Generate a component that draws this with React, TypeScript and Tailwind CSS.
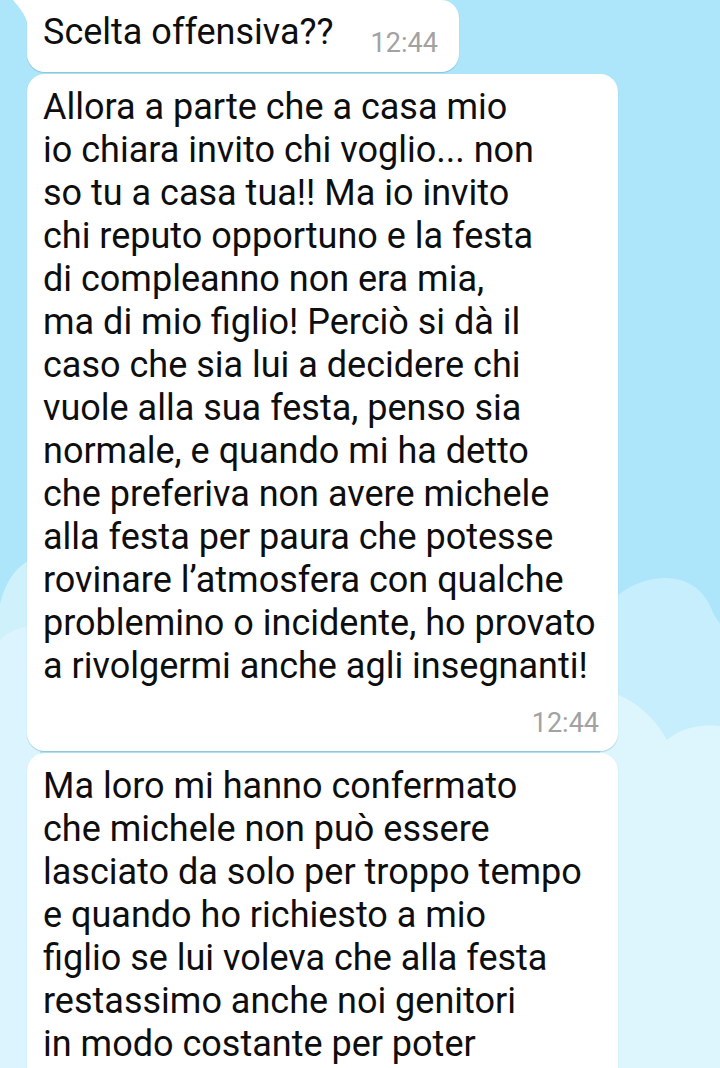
const firstLines = [
  "Allora a parte che a casa mio",
  "io chiara invito chi voglio... non",
  "so tu a casa tua!! Ma io invito",
  "chi reputo opportuno e la festa",
  "di compleanno non era mia,",
  "ma di mio figlio! Perciò si dà il",
  "caso che sia lui a decidere chi",
  "vuole alla sua festa, penso sia",
  "normale, e quando mi ha detto",
  "che preferiva non avere michele",
  "alla festa per paura che potesse",
  "rovinare l’atmosfera con qualche",
  "problemino o incidente, ho provato",
  "a rivolgermi anche agli insegnanti!",
];

const secondLines = [
  "Ma loro mi hanno confermato",
  "che michele non può essere",
  "lasciato da solo per troppo tempo",
  "e quando ho richiesto a mio",
  "figlio se lui voleva che alla festa",
  "restassimo anche noi genitori",
  "in modo costante per poter",
];

function Sky() {
  return (
    <svg
      className="absolute inset-0 h-full w-full"
      viewBox="0 0 720 1068"
      preserveAspectRatio="none"
    >
      <rect width="720" height="1068" fill="#ade6fa" />
      {/* far clouds */}
      <path
        d="M600 615 C615 592 640 578 665 578 C690 578 705 592 712 610 C716 620 720 622 720 624 L720 1068 L600 1068 Z"
        fill="#c6eefc"
      />
      <path
        d="M0 604 C6 580 18 562 40 556 L40 1068 L0 1068 Z"
        fill="#cff1fc"
      />
      {/* near clouds */}
      <path
        d="M600 690 C620 692 650 708 667 740 C680 728 700 724 720 726 L720 1068 L600 1068 Z"
        fill="#ddf5fd"
      />
      <path
        d="M0 640 C10 630 22 626 40 626 L40 1068 L0 1068 Z"
        fill="#dbf4fd"
      />
    </svg>
  );
}

export default function App() {
  return (
    <div className="relative h-[1068px] w-[720px] overflow-hidden font-['Roboto',sans-serif] text-[#0e0e0e]">
      <Sky />
      <div className="relative flex flex-col items-start gap-[2px] pl-[27px]">
        <div className="relative flex items-end rounded-[18px] rounded-tl-none bg-white pb-[18px] pl-[16px] pr-[21px] pt-[11px] shadow-[0_1px_1px_rgba(40,90,110,0.25)]">
          <svg
            className="absolute -left-[14px] top-0 h-[22px] w-[14px]"
            viewBox="0 0 14 22"
          >
            <path d="M0 0 L14 0 L14 22 C12 14 6 7 0 0 Z" fill="#fff" />
          </svg>
          <span className="text-[36px] leading-[43px]">Scelta offensiva??</span>
          <span className="ml-[37px] text-[27px] leading-[21px] text-[#a2a2a2]">
            12:44
          </span>
        </div>

        <div className="w-[591px] rounded-[18px] bg-white pb-[14px] pl-[16px] pr-[19px] pt-[12px] shadow-[0_1px_1px_rgba(40,90,110,0.25)]">
          {firstLines.map((line) => (
            <div key={line} className="whitespace-nowrap text-[36px] leading-[43px]">
              {line}
            </div>
          ))}
          <div className="mt-[22px] text-right text-[27px] leading-[27px] text-[#a2a2a2]">
            12:44
          </div>
        </div>

        <div className="w-[591px] rounded-[18px] bg-white pb-[40px] pl-[16px] pr-[19px] pt-[12px] shadow-[0_1px_1px_rgba(40,90,110,0.25)]">
          {secondLines.map((line) => (
            <div key={line} className="whitespace-nowrap text-[36px] leading-[43px]">
              {line}
            </div>
          ))}
        </div>
      </div>
    </div>
  );
}
